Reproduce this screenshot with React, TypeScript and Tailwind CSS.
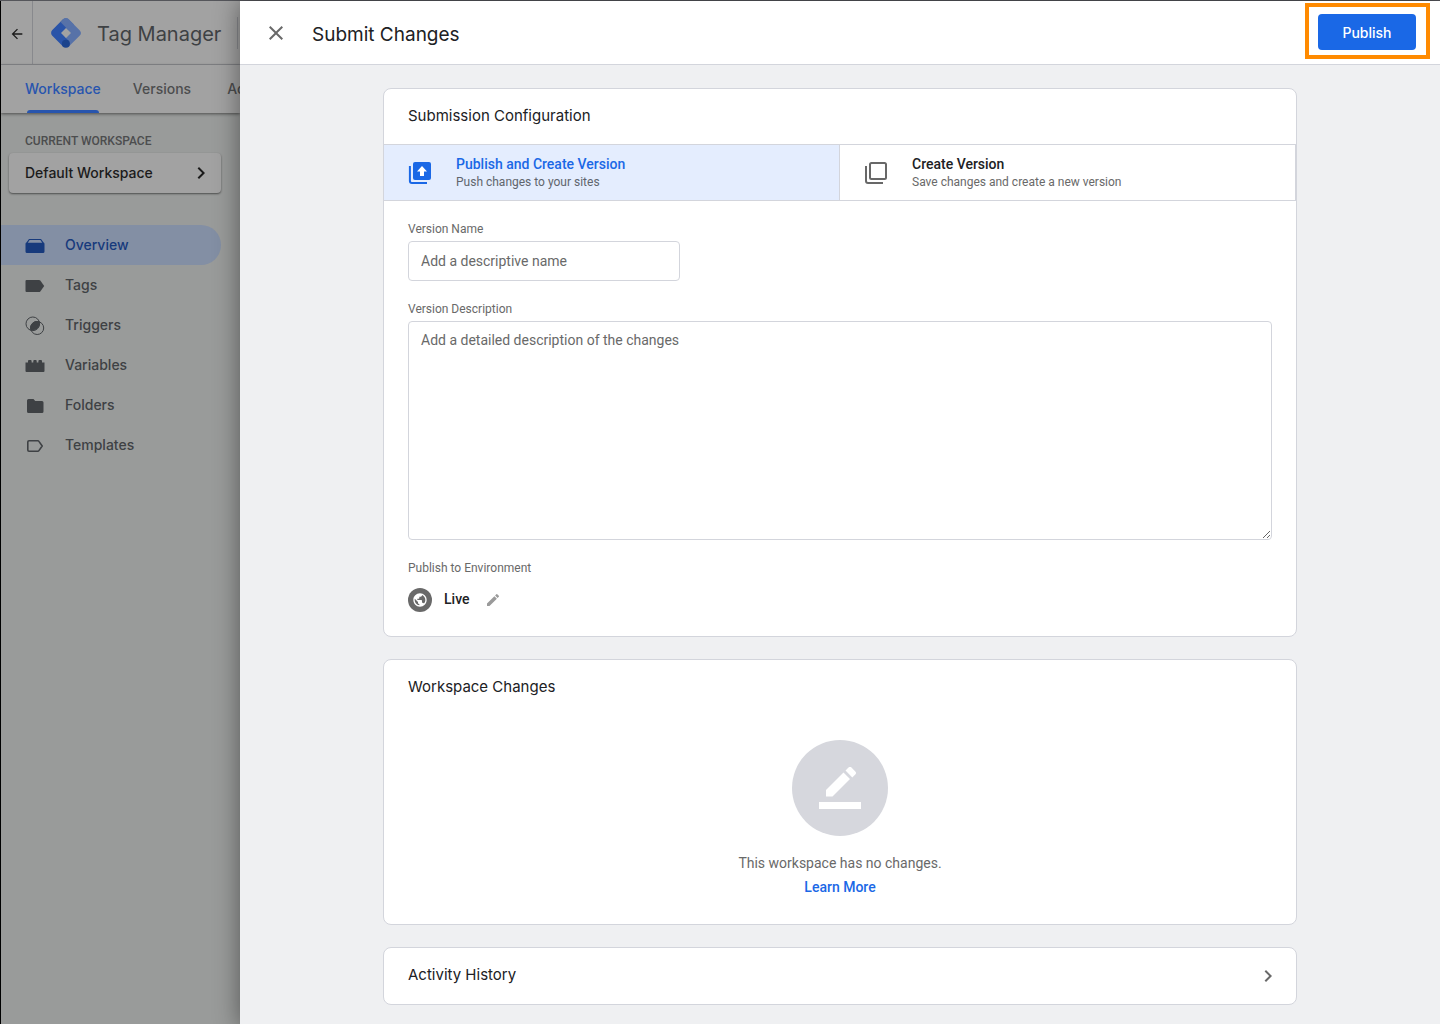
import React from "react";
import { MdArrowBack, MdChevronRight, MdClose, MdEdit, MdPublic } from "react-icons/md";

const display = "font-['Inter',sans-serif]";

function Logo() {
  return (
    <svg viewBox="0 0 30 30" className="size-[30px] shrink-0" aria-hidden="true">
      <path d="M12 1.400a4 4 0 0 1 5.800 0l10.800 10.800a4 4 0 0 1 0 5.600L17.800 28.600l-5.700-5.700L20 15l-8-8z" fill="#5772a8" />
      <path d="M12 1.300 1.300 12.100a4 4 0 0 0 0 5.700L12 28.600l5.800-5.600L10 15l8-8z" fill="#2a54a8" />
      <path d="M12 1.300a4 4 0 0 1 5.800 0L23 6.500 17.500 12.300 9.500 4z" fill="#5772a8" />
      <circle cx="14.900" cy="25.800" r="4" fill="#1b438c" />
    </svg>
  );
}

function OverviewIcon() {
  return (
    <svg viewBox="0 0 20 20" className="size-5" fill="currentColor" aria-hidden="true">
      <path fillRule="evenodd" d="M4 4h12l2.600 3.600q.9.400.9 1.500v7.400q0 1.500-1.500 1.500H2Q.5 18 .5 16.500V9.100q0-1.100.9-1.500zm.6 1L2.800 7.800h14.400L15.400 5z" />
    </svg>
  );
}

function TagIcon() {
  return (
    <svg viewBox="0 0 20 20" className="size-5" fill="currentColor" aria-hidden="true">
      <path d="M1.500 5H14q.8 0 1.300.6L19.200 11l-3.900 5.400q-.5.600-1.300.6H1.500Q.5 17 .5 16V6q0-1 1-1z" />
    </svg>
  );
}

function TriggerIcon() {
  return (
    <svg viewBox="0 0 20 20" className="size-5" fill="none" stroke="currentColor" aria-hidden="true">
      <circle cx="7.800" cy="8.800" r="6.800" />
      <circle cx="12.200" cy="13" r="6.500" />
      <path d="M14.200 6.800A6.800 6.800 0 0 1 5.800 14.800 6.500 6.500 0 0 1 14.200 6.800z" fill="currentColor" />
    </svg>
  );
}

function VariableIcon() {
  return (
    <svg viewBox="0 0 20 20" className="size-5" fill="currentColor" aria-hidden="true">
      <path d="M.5 7.500H3V6q0-1 1-1h1.600q1 0 1 1v1.500h1.700V6q0-1 1-1h1.400q1 0 1 1v1.500h1.700V6q0-1 1-1H16q1 0 1 1v1.500h2.500V16q0 1-1 1h-17q-1 0-1-1z" />
    </svg>
  );
}

function FolderIcon() {
  return (
    <svg viewBox="0 0 20 20" className="size-5" fill="currentColor" aria-hidden="true">
      <path d="M3.500 4h5L10.200 6H17q1.500 0 1.500 1.500v9q0 1.500-1.500 1.500H3.500Q2 18 2 16.500v-11Q2 4 3.500 4z" />
    </svg>
  );
}

function TemplateIcon() {
  return (
    <svg viewBox="0 0 20 20" className="size-5" fill="none" stroke="currentColor" strokeWidth="1.600" strokeLinejoin="round" aria-hidden="true">
      <path d="M4 5.800h8.800q.7 0 1.100.6l3.300 4.600-3.300 4.600q-.4.600-1.100.6H4q-1.200 0-1.200-1.200V7q0-1.200 1.200-1.200z" />
    </svg>
  );
}

function PublishIcon() {
  return (
    <svg viewBox="0 0 24 24" className="size-6" aria-hidden="true">
      <path d="M1.900 5v15q0 2 2 2H19" fill="none" stroke="#1a68e6" strokeWidth="2" />
      <rect x="5" y="1" width="18" height="18" rx="2" fill="#1a68e6" />
      <path d="m14 5 5 5.400h-3V15h-4v-4.600H9z" fill="#fff" />
    </svg>
  );
}

function VersionIcon() {
  return (
    <svg viewBox="0 0 24 24" className="size-6" fill="none" stroke="#686868" strokeWidth="2" aria-hidden="true">
      <path d="M2 5v15q0 2 2 2h15" />
      <rect x="6" y="2" width="16" height="16" rx="1.500" />
    </svg>
  );
}

const navItems = [
  { label: "Overview", icon: <OverviewIcon />, active: true },
  { label: "Tags", icon: <TagIcon />, active: false },
  { label: "Triggers", icon: <TriggerIcon />, active: false },
  { label: "Variables", icon: <VariableIcon />, active: false },
  { label: "Folders", icon: <FolderIcon />, active: false },
  { label: "Templates", icon: <TemplateIcon />, active: false },
];

function Background() {
  return (
    <div className={`flex w-60 shrink-0 flex-col overflow-hidden border-l border-black bg-[#999b9a] text-sm font-medium text-[#3e4144] ${display}`}>
      <header className="flex h-16 shrink-0 items-center border-b border-[#88898d] bg-[#a2a2a2]">
        <button type="button" aria-label="Back" className="flex h-full w-8 shrink-0 items-center justify-center border-r border-[#88898d] pt-0.5 text-[#1b1b1b]">
          <MdArrowBack size={16} />
        </button>
        <div className="flex shrink-0 items-center gap-4 pl-[18px]">
          <Logo />
          <span className="pt-0.5 text-xl font-normal">Tag Manager</span>
        </div>
        <span className="ml-4 h-8 w-px shrink-0 bg-[#88898d]" />
      </header>
      <nav aria-label="Container" className="z-10 flex h-12 shrink-0 bg-[#a2a2a2] pl-6 shadow-[0_1px_3px_rgba(0,0,0,0.5)]">
        <a href="#workspace" className="flex shrink-0 flex-col text-[#2855ae]">
          <span className="flex flex-1 items-center pt-0.5">Workspace</span>
          <span className="mx-0.5 h-[3px] rounded-t-sm bg-[#2855ae]" />
        </a>
        <a href="#versions" className="ml-8 flex shrink-0 items-center text-[#4c4d4e]">Versions</a>
        <a href="#admin" className="ml-9 flex shrink-0 items-center text-[#4c4d4e]">Admin</a>
      </nav>
      <div className="flex flex-col pt-5 pr-[19px]">
        <p className="pl-6 font-['Roboto',sans-serif] text-xs leading-4 text-[#4c4d4e]">CURRENT WORKSPACE</p>
        <button type="button" className="mt-1 ml-2 flex h-10 items-center justify-between rounded bg-[#a2a2a2] pr-2 pl-4 text-[#1b1b1b] shadow-[0_1px_2px_rgba(0,0,0,0.5)]">
          Default Workspace
          <MdChevronRight size={24} />
        </button>
        <nav aria-label="Workspace" className="mt-8 flex flex-col">
          {navItems.map((item) => (
            <a
              key={item.label}
              href={`#${item.label.toLowerCase()}`}
              className={`flex h-10 items-center gap-5 rounded-r-full pl-6 ${item.active ? "bg-[#838fa4] text-[#173a7c]" : ""}`}
            >
              {item.icon}
              {item.label}
            </a>
          ))}
        </nav>
      </div>
    </div>
  );
}

function Card({ children }: { children: React.ReactNode }) {
  return <section className="overflow-hidden rounded-lg border border-[#d3d5dc] bg-white">{children}</section>;
}

const cardTitle = `text-[15px] leading-6 text-[#202124] ${display}`;

export default function App() {
  return (
    <div className="flex min-h-screen border-t border-[#55565b] bg-[#eff0f2] font-['Roboto',sans-serif] text-sm text-[#696969]">
      <Background />
      <div role="dialog" aria-labelledby="dialog-title" className="z-20 flex min-w-0 flex-1 flex-col bg-[#eff0f2] shadow-[0_0_24px_rgba(0,0,0,0.45)]">
        <header className="flex h-16 items-center border-b border-[#d3d5dc] bg-white pl-6">
          <button type="button" aria-label="Close">
            <MdClose size={24} />
          </button>
          <h1 id="dialog-title" className={`ml-6 flex-1 pt-1 text-[19px] text-[#202124] ${display}`}>Submit Changes</h1>
          <div className="mt-0.5 mr-2.5 flex h-14 items-center self-start border-4 border-[#ff8a00] pr-2.5 pl-[9px] pt-0.5">
            <button type="button" className={`h-9 w-[98px] rounded bg-[#1a68e6] pt-0.5 font-medium text-white ${display}`}>Publish</button>
          </div>
        </header>
        <main className="mx-auto flex w-full max-w-[914px] flex-col gap-[22px] py-[23px]">
          <Card>
            <div className="h-14 border-b border-[#d3d5dc] px-6 pt-[15px]">
              <h2 className={cardTitle}>Submission Configuration</h2>
            </div>
            <div className="grid h-14 grid-cols-2 border-b border-[#d3d5dc]">
              <button type="button" aria-pressed="true" className="flex items-center gap-6 border-r border-[#d3d5dc] bg-[#e4edfe] pl-6 text-left">
                <PublishIcon />
                <span className="flex flex-col pb-0.5">
                  <span className="font-medium leading-5 text-[#1a68e6]">Publish and Create Version</span>
                  <span className="text-xs leading-4 text-[#60656d]">Push changes to your sites</span>
                </span>
              </button>
              <button type="button" aria-pressed="false" className="flex items-center gap-6 border-r border-[#d3d5dc] pl-6 text-left">
                <VersionIcon />
                <span className="flex flex-col pb-0.5">
                  <span className="font-medium leading-5 text-[#202124]">Create Version</span>
                  <span className="text-xs leading-4">Save changes and create a new version</span>
                </span>
              </button>
            </div>
            <div className="flex flex-col px-6 pt-4 pb-6">
              <label htmlFor="version-name" className="text-xs leading-6">Version Name</label>
              <input id="version-name" placeholder="Add a descriptive name" className="h-10 w-[272px] rounded border border-[#d3d5dc] px-3 placeholder:text-[#696969]" />
              <label htmlFor="version-description" className="mt-4 text-xs leading-6">Version Description</label>
              <textarea id="version-description" placeholder="Add a detailed description of the changes" className="h-[219px] resize-y rounded border border-[#d3d5dc] px-3 py-2 placeholder:text-[#696969]" />
              <p className="mt-4 text-xs leading-6">Publish to Environment</p>
              <div className="mt-2 flex h-6 items-center">
                <span className="flex size-6 items-center justify-center rounded-full bg-[#696969] text-white">
                  <MdPublic size={16} />
                </span>
                <span className="ml-3 pb-0.5 font-medium text-[#202124]">Live</span>
                <button type="button" aria-label="Edit environment" className="ml-4 text-[#9a9a9a]">
                  <MdEdit size={16} />
                </button>
              </div>
            </div>
          </Card>
          <Card>
            <h2 className={`h-14 px-6 pt-[15px] ${cardTitle}`}>Workspace Changes</h2>
            <div className="flex flex-col items-center pt-6 pb-[25px] leading-6">
              <span className="mb-[15px] flex size-24 items-center justify-center rounded-full bg-[#d6d7dd] text-white">
                <svg viewBox="0 0 42 42" className="size-[42px]" fill="currentColor" aria-hidden="true">
                  <path d="M24.500 5.500 7 23v6.500h6.500L31 12zM26.500 3.600l3-3q1.500-1.500 3 0l3.800 3.800q1.500 1.500 0 3l-3 3zM0 35h42v7H0z" />
                </svg>
              </span>
              <p>This workspace has no changes.</p>
              <a href="#learn-more" className="font-medium text-[#1a68e6]">Learn More</a>
            </div>
          </Card>
          <Card>
            <button type="button" className="flex h-14 w-full items-center justify-between pr-4 pl-6">
              <span className={`pb-0.5 ${cardTitle}`}>Activity History</span>
              <MdChevronRight size={24} />
            </button>
          </Card>
        </main>
      </div>
    </div>
  );
}
